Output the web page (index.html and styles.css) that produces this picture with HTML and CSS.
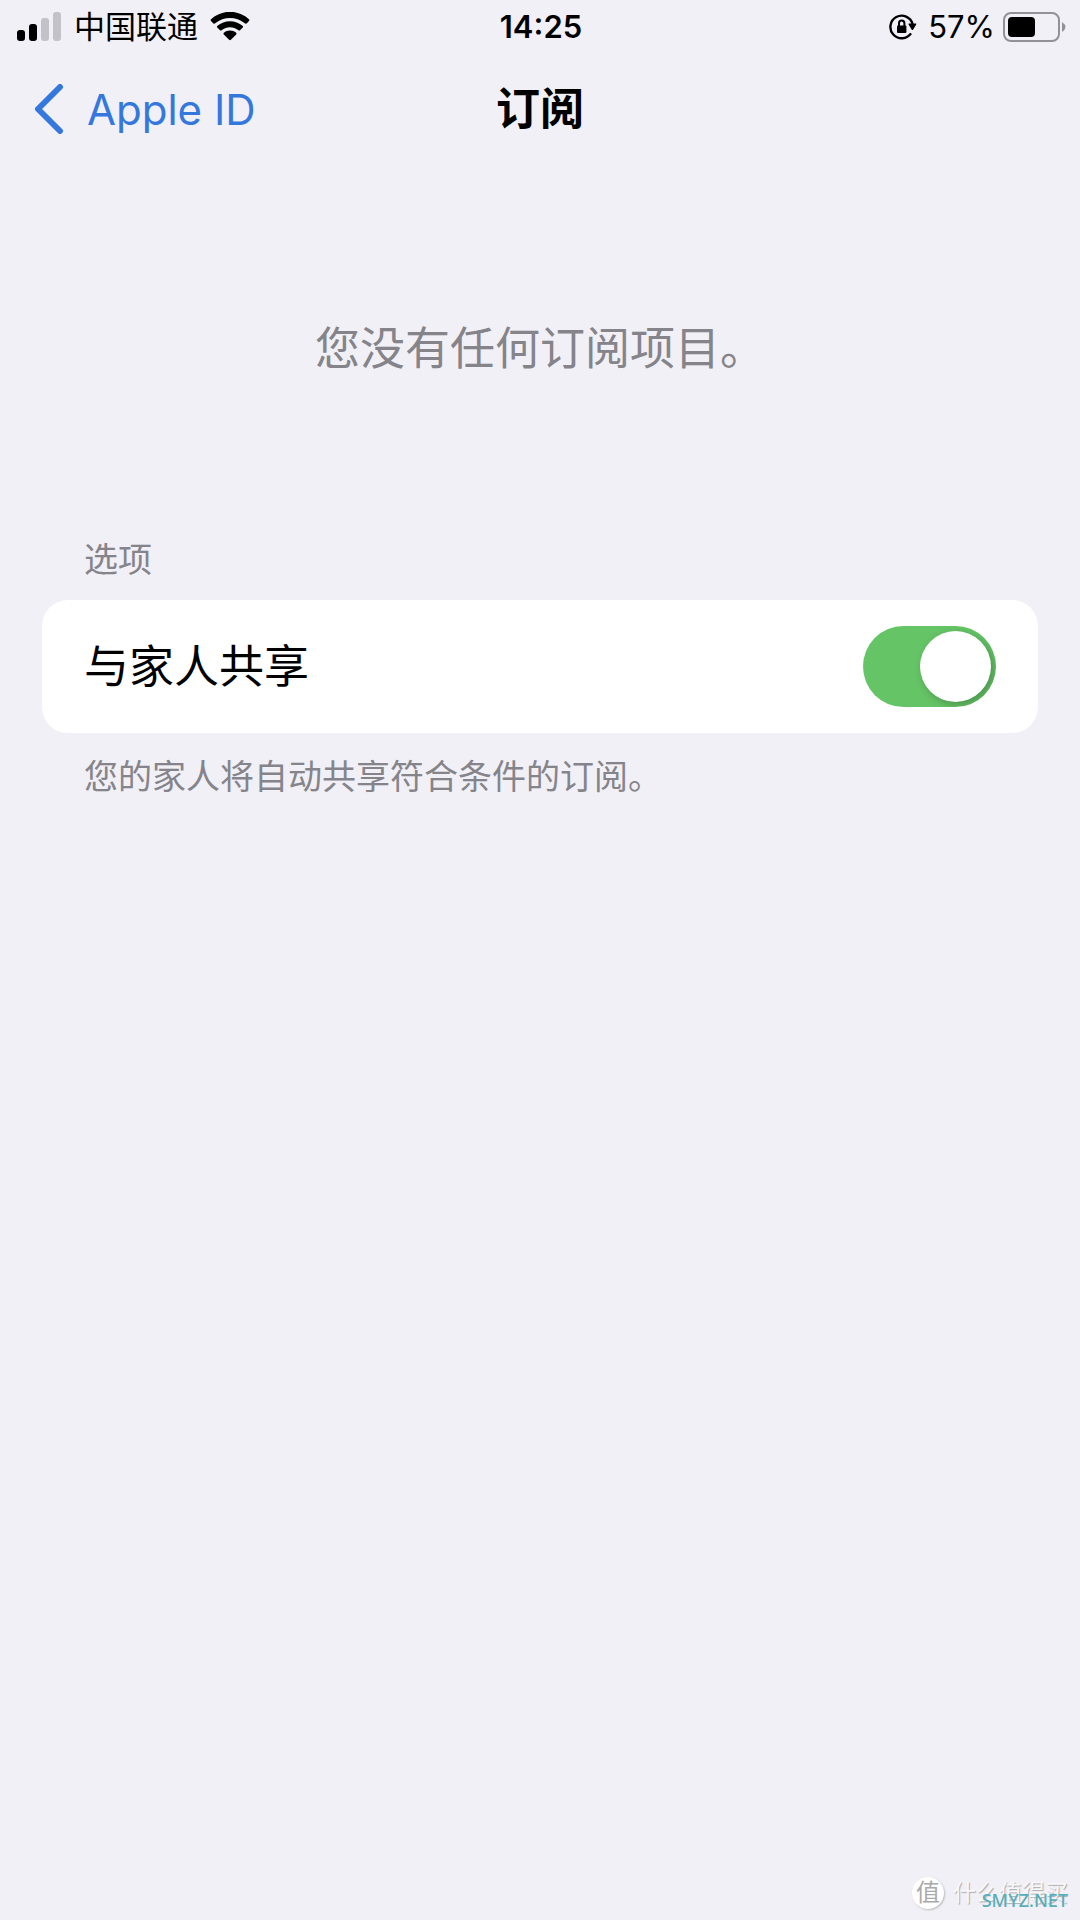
FILE: index.html
```
<!DOCTYPE html>
<html lang="zh-CN">
<head>
    <meta charset="UTF-8">
    <meta name="viewport" content="width=device-width, initial-scale=1.0">
    <title>订阅</title>
    <link rel="stylesheet" href="styles.css">
</head>
<body>
    <div class="status-bar">
        <div class="status-left">
            <svg class="signal" width="46" height="30" viewBox="0 0 46 30">
                <rect x="1" y="18" width="8" height="11" rx="3"/>
                <rect x="13" y="12" width="8" height="17" rx="3"/>
                <rect class="off" x="25" y="6" width="8" height="23" rx="3"/>
                <rect class="off" x="37" y="0" width="8" height="29" rx="3"/>
            </svg>
            <span>中国联通</span>
            <svg class="wifi" width="40" height="30" viewBox="0 0 40 30">
                <path d="M0.8 7.4 C12 -2.8 28 -2.8 39.2 7.4 Q39.6 8.2 39 9 L36.6 11.4 Q35.6 12 34.8 11.3 C26 4.2 14 4.2 5.2 11.3 Q4.4 12 3.4 11.4 L1 9 Q0.4 8.2 0.8 7.4 Z"/>
                <path d="M7.2 14 C14.5 7.6 25.5 7.6 32.8 14 Q33.4 14.8 32.8 15.6 L30 18.2 Q29.2 18.8 28.4 18.2 C23.4 14.2 16.6 14.2 11.6 18.2 Q10.8 18.8 10 18.2 L7.2 15.6 Q6.6 14.8 7.2 14 Z"/>
                <path d="M13.8 20.8 C17.4 17.8 22.6 17.8 26.2 20.8 Q26.8 21.6 26.2 22.4 L20.9 27.8 Q20 28.6 19.1 27.8 L13.8 22.4 Q13.2 21.6 13.8 20.8 Z"/>
            </svg>
        </div>
        <div class="status-time">14:25</div>
        <div class="status-right">
            <svg width="28" height="26" viewBox="0 0 28 26">
                <path class="ring" d="M22 19.4 A11.3 11.3 0 1 1 23.6 10"/>
                <path d="M19.6 10.6 Q19 9.6 20.2 9.6 L26.6 9.6 Q27.8 9.6 27.2 10.6 L24.2 15.6 Q23.4 16.6 22.6 15.6 Z"/>
                <rect x="8" y="11.4" width="9.4" height="7.6" rx="1"/>
                <path class="shackle" d="M10 12 V9.2 A2.7 2.7 0 0 1 15.4 9.2 V12"/>
            </svg>
            <span>57%</span>
            <svg width="64" height="30" viewBox="0 0 64 30">
                <rect class="battery-case" x="2" y="1" width="55" height="28" rx="7"/>
                <rect x="6" y="5" width="27" height="20" rx="4"/>
                <path class="battery-tip" d="M60 10 Q67 15 60 20 Z"/>
            </svg>
        </div>
    </div>

    <header class="nav-bar">
        <a class="back" href="#">
            <svg width="30" height="50" viewBox="0 0 30 50">
                <path d="M26 3 L4 25 L26 47"/>
            </svg>
            <span>Apple ID</span>
        </a>
        <h1>订阅</h1>
    </header>

    <main>
        <p class="empty-message">您没有任何订阅项目。</p>

        <h2 class="section-title">选项</h2>
        <div class="card">
            <label for="familyShare">与家人共享</label>
            <input type="checkbox" id="familyShare" class="toggle" checked>
        </div>
        <p class="section-note">您的家人将自动共享符合条件的订阅。</p>
    </main>

    <div class="watermark">
        <span class="badge">值</span>
        <span class="brand">什么值得买</span>
        <span class="site">SMYZ.NET</span>
    </div>
</body>
</html>
```

FILE: styles.css
```
* {
    box-sizing: border-box;
}

body {
    margin: 0;
    min-height: 100vh;
    position: relative;
    background-color: #f1f0f6;
    color: #000;
    font-family: Inter, "Noto Sans CJK SC", sans-serif;
}

svg {
    display: block;
    flex-shrink: 0;
}

/* Status bar */
.status-bar {
    display: grid;
    grid-template-columns: 1fr auto 1fr;
    align-items: center;
    height: 54px;
    padding: 0 14px 0 16px;
    font-size: 31px;
    line-height: 40px;
}

.status-left, .status-right {
    display: flex;
    align-items: center;
    gap: 12px;
}

.status-right {
    justify-content: flex-end;
    gap: 7px;
}

.status-right span {
    margin-left: 4px;
}

.status-time {
    font-weight: 600;
}

.signal .off {
    fill: #c3c2c8;
}

.ring, .shackle {
    fill: none;
    stroke: #000;
    stroke-width: 2.4;
}

.shackle {
    stroke-width: 2;
}

.battery-case {
    fill: none;
    stroke: #929196;
    stroke-width: 2;
}

.battery-tip {
    fill: #929196;
}

/* Navigation */
.nav-bar {
    display: grid;
    grid-template-columns: 1fr auto 1fr;
    align-items: center;
    height: 110px;
    padding: 0 34px;
}

.back {
    display: flex;
    align-items: center;
    gap: 23px;
    color: #3478de;
    font-size: 42px;
    text-decoration: none;
}

.back path {
    fill: none;
    stroke: #3478de;
    stroke-width: 6;
    stroke-linecap: round;
    stroke-linejoin: round;
}

.nav-bar h1 {
    margin: 0;
    font-size: 44px;
    font-weight: 600;
    line-height: 60px;
}

/* Content */
main {
    padding: 0 42px;
}

.empty-message {
    margin: 155px 0 161px;
    color: #85848a;
    font-size: 45px;
    line-height: 60px;
    text-align: center;
}

.section-title, .section-note {
    margin: 0 42px;
    color: #85848a;
    font-size: 34px;
    font-weight: 400;
    line-height: 40px;
}

.card {
    display: flex;
    align-items: center;
    justify-content: space-between;
    height: 133px;
    margin: 20px 0 24px;
    padding: 0 42px;
    border-radius: 26px;
    background-color: #fff;
    font-size: 45px;
    line-height: 60px;
}

.toggle {
    appearance: none;
    display: flex;
    justify-content: flex-end;
    width: 133px;
    height: 81px;
    margin: 0;
    padding: 5px;
    border-radius: 41px;
    background-color: #65c466;
    overflow: hidden;
}

.toggle::before {
    content: "";
    width: 71px;
    height: 71px;
    border-radius: 50%;
    background-color: #fff;
    box-shadow: 3px 3px 8px rgba(0, 0, 0, 0.25);
}

.toggle:not(:checked) {
    justify-content: flex-start;
    background-color: #e9e9eb;
}

/* Watermark */
.watermark {
    position: absolute;
    right: 12px;
    bottom: 10px;
    display: flex;
    align-items: center;
    gap: 9px;
    line-height: 34px;
}

.badge {
    width: 32px;
    height: 32px;
    border-radius: 50%;
    background-color: #fff;
    box-shadow: 1px 1px 2px #bbb;
    color: #aaa;
    font-size: 24px;
    line-height: 32px;
    text-align: center;
}

.brand {
    color: #f8f8fb;
    font-size: 23px;
    text-shadow: 1px 1px 1px #aaa;
}

.site {
    position: absolute;
    right: 0;
    bottom: -7px;
    color: #58aebb;
    font-family: "Noto Sans", sans-serif;
    font-size: 18px;
    font-weight: 500;
}
```
